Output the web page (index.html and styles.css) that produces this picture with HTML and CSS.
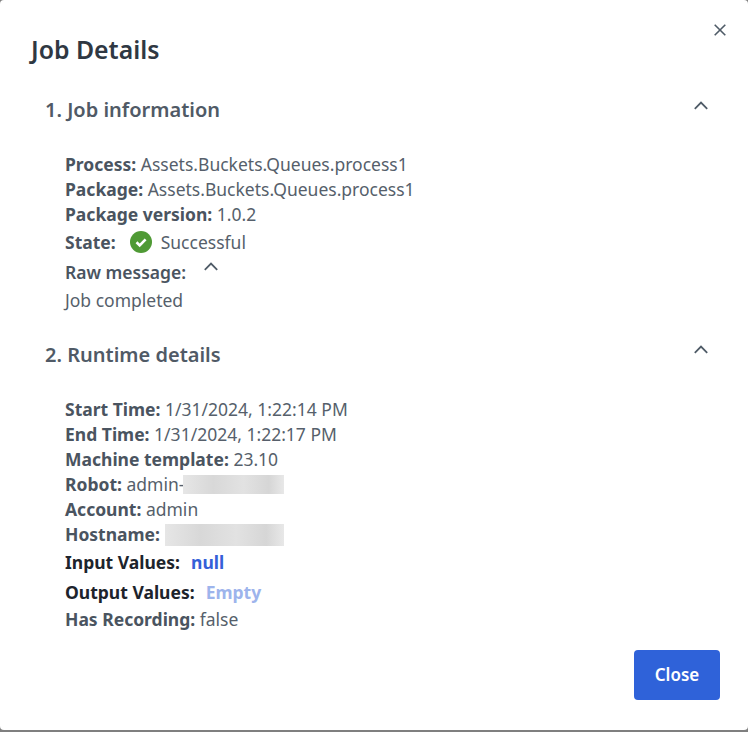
FILE: index.html
```html
<!DOCTYPE html>
<html lang="en">
<head>
<meta charset="utf-8">
<title>Job Details</title>
<link rel="stylesheet" href="styles.css">
</head>
<body>
<div class="modal">
  <header class="modal-head">
    <h1 class="title">Job Details</h1>
    <button class="close-x" aria-label="Close">
      <svg width="12" height="12" viewBox="0 0 12 12"><path d="M0.7 0.7L11.3 11.3M11.3 0.7L0.7 11.3" stroke="#4f5b67" stroke-width="1.6" fill="none"/></svg>
    </button>
  </header>

  <section class="section section-one">
    <div class="section-head">
      <h2 class="heading">1. Job information</h2>
      <svg class="chevron" width="14" height="9" viewBox="0 0 14 9"><path d="M0.8 7.8L7 1.6L13.2 7.8" stroke="#4f5b67" stroke-width="1.8" fill="none"/></svg>
    </div>
    <div class="rows">
      <div class="row"><b>Process:</b> Assets.Buckets.Queues.process1</div>
      <div class="row"><b>Package:</b> Assets.Buckets.Queues.process1</div>
      <div class="row"><b>Package version:</b> 1.0.2</div>
      <div class="row row-state"><b>State:</b>
        <svg class="check" width="22" height="22" viewBox="0 0 22 22"><circle cx="11" cy="11" r="11" fill="#4f9a35"/><path d="M6.5 11.3L9.7 14.4L15.6 8.3" stroke="#fff" stroke-width="2.6" fill="none"/></svg>
        <span>Successful</span></div>
      <div class="row row-raw"><b>Raw message:</b>
        <svg class="chevron-small" width="14" height="9" viewBox="0 0 14 9"><path d="M0.8 7.8L7 1.6L13.2 7.8" stroke="#4f5b67" stroke-width="1.8" fill="none"/></svg></div>
      <div class="row row-msg">Job completed</div>
    </div>
  </section>

  <section class="section section-two">
    <div class="section-head">
      <h2 class="heading">2. Runtime details</h2>
      <svg class="chevron" width="14" height="9" viewBox="0 0 14 9"><path d="M0.8 7.8L7 1.6L13.2 7.8" stroke="#4f5b67" stroke-width="1.8" fill="none"/></svg>
    </div>
    <div class="rows">
      <div class="row"><b>Start Time:</b> 1/31/2024, 1:22:14 PM</div>
      <div class="row"><b>End Time:</b> 1/31/2024, 1:22:17 PM</div>
      <div class="row"><b>Machine template:</b> 23.10</div>
      <div class="row row-blur"><b>Robot:</b>&nbsp;admin-<span class="blur blur-robot"></span></div>
      <div class="row"><b>Account:</b> admin</div>
      <div class="row row-blur"><b>Hostname:</b><span class="blur blur-host"></span></div>
      <div class="row row-values row-input"><b>Input Values:</b><span class="link">null</span></div>
      <div class="row row-values row-output"><b>Output Values:</b><span class="link link-muted">Empty</span></div>
      <div class="row"><b>Has Recording:</b> false</div>
    </div>
  </section>

  <footer class="modal-foot">
    <button class="btn">Close</button>
  </footer>
</div>
</body>
</html>
```
FILE: styles.css
```css
* { box-sizing: border-box; }
html, body { margin: 0; height: 100%; }
body {
  background: #7f7f7f;
  font-family: "Noto Sans", sans-serif;
  color: #4f5864;
  overflow: hidden;
}
.modal {
  width: 748px;
  height: 730px;
  background: #fff;
  border-radius: 4px;
  padding: 0 28px 0 30px;
  display: flex;
  flex-direction: column;
}
.modal-head {
  display: flex;
  justify-content: space-between;
  padding-top: 33px;
}
.title {
  margin: 0 0 0 1px;
  font-size: 24.8px;
  line-height: 33px;
  font-weight: 600;
  color: #2f3843;
}
.close-x {
  border: 0;
  background: none;
  padding: 0;
  width: 12px;
  height: 12px;
  margin-top: -9px;
  margin-right: -6px;
  display: flex;
}
.section { padding-left: 15px; }
.section-one { margin-top: 30px; }
.section-two { margin-top: 29px; }
.section-head {
  display: flex;
  justify-content: space-between;
  height: 27px;
}
.heading {
  margin: 0;
  font-size: 20px;
  line-height: 27px;
  font-weight: 600;
  color: #505a66;
}
.chevron { margin: 4px 12px 0 0; }
.section-one .chevron { margin-top: 5px; }
.rows { padding: 29px 0 0 20px; }
.row {
  font-size: 17.5px;
  line-height: 25px;
  height: 25px;
  color: #565f6b;
  white-space: nowrap;
}
.row b { font-weight: 700; color: #4a5460; }
.row-state { display: flex; align-items: center; height: 30px; }
.check { margin: 0 9px 0 14px; }
.row-raw { display: flex; height: 30px; align-items: center; }
.row-raw b { font-weight: 600; }
.chevron-small { margin: -12px 0 0 18px; }
.row-msg { height: 24px; margin-top: 1px; }
.row-blur { display: flex; align-items: center; }
.blur { display: block; height: 19px; background: linear-gradient(90deg, #e6e6e6, #d8d8d8 30%, #e2e2e2 60%, #d6d6d6 85%, #e8e8e8); }
.blur-robot { width: 101px; margin-left: -1px; }
.blur-host { width: 119px; height: 22px; margin-left: 5px; }
.row-values { display: flex; height: 30px; align-items: center; }
.row-values b { color: #1d242c; font-weight: 700; }
.link { font-weight: 700; color: #3560d8; margin-left: 11px; }
.link-muted { color: #9db4ec; }
.modal-foot {
  margin-top: auto;
  padding-bottom: 30px;
  display: flex;
  justify-content: flex-end;
}
.btn {
  width: 86px;
  height: 50px;
  padding: 0 0 2px;
  border: 0;
  border-radius: 4px;
  background: #2f62d9;
  color: #fff;
  font-family: "Noto Sans", sans-serif;
  font-size: 17px;
  font-weight: 600;
}
```
